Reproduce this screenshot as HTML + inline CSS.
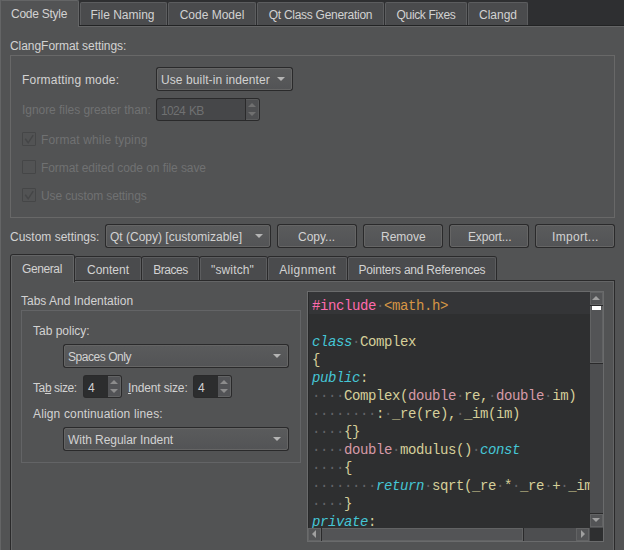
<!DOCTYPE html>
<html><head><meta charset="utf-8">
<style>
*{margin:0;padding:0;box-sizing:border-box}
html,body{width:624px;height:550px;overflow:hidden;background:#525354}
body{position:relative;font-family:"Liberation Sans",sans-serif;font-size:12px;color:#d2d2d2}
.a{position:absolute}
.t{position:absolute;white-space:pre;line-height:14px;font-size:12px;color:#d2d2d2}
.dis{color:#707172}
.u{text-decoration:underline;text-underline-offset:1px}
.mt{position:absolute;top:2px;height:23px;background:#4a4b4d;border:1px solid #5c5d5f;border-bottom:none;border-radius:2px 2px 0 0}
.st{position:absolute;background:#2a2a2b;border-radius:3px 3px 0 0}
.st>div{position:absolute;left:1px;top:1px;right:1px;bottom:0;background:#4a4b4d;border:1px solid #5c5d5f;border-bottom:none;border-radius:2px 2px 0 0}
.btn{position:absolute;background:#2a2a2b;border-radius:3px}
.btn>div{position:absolute;left:1px;top:1px;right:1px;bottom:1px;border:1px solid #656565;border-radius:2px;background:linear-gradient(#5a5b5c,#535456)}
.gb{position:absolute;border:1px solid #686868}
.cb{position:absolute;width:14px;height:14px;border:1px solid #454647;border-radius:1px}
.code{position:absolute;font-family:"Liberation Mono",monospace;font-size:14px;letter-spacing:-0.4px;line-height:18px;white-space:pre;color:#d6cf9a}
.pp{color:#ff6aad}.str{color:#d69545}.kw{color:#45c6d6;font-style:italic}.pt{color:#d69aa7}.ws{color:#636468}
</style></head><body>
<div class="a" style="left:0;top:0;width:624px;height:25px;background:#2e2f31"></div>
<div class="a" style="left:0;top:25px;width:624px;height:1px;background:#222324"></div>
<div class="a" style="left:0;top:26px;width:624px;height:1px;background:#646566"></div>
<div class="a" style="left:0;top:0;width:1px;height:550px;background:#646566"></div>
<div class="a" style="left:0;top:0;width:79px;height:27px;background:#525354;border:1px solid #646566;border-bottom:none;border-radius:2px 2px 0 0"></div>
<div class="t" style="left:11px;top:7px;letter-spacing:-0.25px">Code Style</div>
<div class="mt" style="left:80px;width:87px"></div>
<div class="t" style="left:80px;top:8px;width:87px;text-align:center;letter-spacing:0px;margin-left:-1px">File Naming</div>
<div class="mt" style="left:168px;width:88px"></div>
<div class="t" style="left:168px;top:8px;width:88px;text-align:center;letter-spacing:0px;margin-left:0px">Code Model</div>
<div class="mt" style="left:257px;width:127px"></div>
<div class="t" style="left:257px;top:8px;width:127px;text-align:center;letter-spacing:-0.28px;margin-left:0px">Qt Class Generation</div>
<div class="mt" style="left:385px;width:82px"></div>
<div class="t" style="left:385px;top:8px;width:82px;text-align:center;letter-spacing:-0.35px;margin-left:0px">Quick Fixes</div>
<div class="mt" style="left:468px;width:60px"></div>
<div class="t" style="left:468px;top:8px;width:60px;text-align:center;letter-spacing:0px;margin-left:0px">Clangd</div>
<div class="t" style="left:10px;top:39px;letter-spacing:-0.05px">ClangFormat settings:</div>
<div class="gb" style="left:10px;top:55px;width:605px;height:163px"></div>
<div class="t" style="left:22px;top:73px;letter-spacing:0.2px">Formatting mode:</div>
<div class="btn" style="left:156px;top:67px;width:137px;height:24px"><div></div></div>
<div class="t" style="left:161px;top:73px;letter-spacing:0.1px">Use built-in indenter</div>
<div class="a" style="left:277px;top:77px;width:0;height:0;border-left:4px solid transparent;border-right:4px solid transparent;border-top:4px solid #b4b4b4"></div>
<div class="t dis" style="left:22px;top:103px;letter-spacing:-0.05px">Ignore files greater than:</div>
<div class="a" style="left:156px;top:98px;width:104px;height:23px;background:#2a2a2b;border-radius:3px"></div>
<div class="a" style="left:157px;top:99px;width:88px;height:21px;background:#464749;border-radius:2px 0 0 2px"></div>
<div class="a" style="left:246px;top:99px;width:13px;height:21px;background:#4f5052;border:1px solid #5a5b5c;border-left:none;border-radius:0 2px 2px 0"></div>
<div class="t dis" style="left:161px;top:104px;letter-spacing:-0.7px;word-spacing:1.5px">1024 KB</div>
<div class="a" style="left:248px;top:103px;width:0;height:0;border-left:4px solid transparent;border-right:4px solid transparent;border-bottom:4px solid #707070"></div>
<div class="a" style="left:248px;top:112px;width:0;height:0;border-left:4px solid transparent;border-right:4px solid transparent;border-top:4px solid #707070"></div>
<div class="cb" style="left:22px;top:132px"></div>
<svg class="a" style="left:22px;top:132px" width="14" height="14"><path d="M3.2 6.8 L6.2 10.8 L11.2 3.2" stroke="#454647" stroke-width="1.5" fill="none"/></svg>
<div class="t dis" style="left:41px;top:133px;letter-spacing:0.13px">Format while typing</div>
<div class="cb" style="left:22px;top:160px"></div>
<div class="t dis" style="left:41px;top:161px;letter-spacing:-0.08px">Format edited code on file save</div>
<div class="cb" style="left:22px;top:188px"></div>
<svg class="a" style="left:22px;top:188px" width="14" height="14"><path d="M3.2 6.8 L6.2 10.8 L11.2 3.2" stroke="#454647" stroke-width="1.5" fill="none"/></svg>
<div class="t dis" style="left:41px;top:189px;letter-spacing:-0.13px">Use custom settings</div>
<div class="t" style="left:10px;top:230px">Custom settings:</div>
<div class="btn" style="left:105px;top:224px;width:166px;height:24px"><div></div></div>
<div class="t" style="left:110px;top:230px">Qt (Copy) [customizable]</div>
<div class="a" style="left:255px;top:234px;width:0;height:0;border-left:4px solid transparent;border-right:4px solid transparent;border-top:4px solid #b4b4b4"></div>
<div class="btn" style="left:277px;top:224px;width:80px;height:24px"><div></div></div>
<div class="t" style="left:298px;top:230px;letter-spacing:0px">Copy...</div>
<div class="btn" style="left:363px;top:224px;width:80px;height:24px"><div></div></div>
<div class="t" style="left:381px;top:230px;letter-spacing:0px">Remove</div>
<div class="btn" style="left:449px;top:224px;width:80px;height:24px"><div></div></div>
<div class="t" style="left:468px;top:230px;letter-spacing:-0.15px">Export...</div>
<div class="btn" style="left:535px;top:224px;width:80px;height:24px"><div></div></div>
<div class="t" style="left:552px;top:230px;letter-spacing:0.3px">Import...</div>
<div class="a" style="left:10px;top:280px;width:605px;height:300px;background:#2a2a2b"></div>
<div class="a" style="left:11px;top:281px;width:603px;height:300px;background:#525354;border:1px solid #646566;border-bottom:none"></div>
<div class="a" style="left:10px;top:254px;width:65px;height:28px;background:#2a2a2b;border-radius:3px 3px 0 0"></div>
<div class="a" style="left:11px;top:255px;width:63px;height:28px;background:#525354;border:1px solid #646566;border-bottom:none;border-radius:2px 2px 0 0"></div>
<div class="t" style="left:22px;top:262px;letter-spacing:-0.4px">General</div>
<div class="st" style="left:74px;top:256px;width:68px;height:24px"><div></div></div>
<div class="t" style="left:75px;top:263px;width:66px;text-align:center;letter-spacing:0px;margin-left:0px">Content</div>
<div class="st" style="left:141px;top:256px;width:59px;height:24px"><div></div></div>
<div class="t" style="left:142px;top:263px;width:57px;text-align:center;letter-spacing:-0.45px;margin-left:0px">Braces</div>
<div class="st" style="left:199px;top:256px;width:69px;height:24px"><div></div></div>
<div class="t" style="left:200px;top:263px;width:67px;text-align:center;letter-spacing:0.15px;margin-left:-1px">"switch"</div>
<div class="st" style="left:267px;top:256px;width:81px;height:24px"><div></div></div>
<div class="t" style="left:268px;top:263px;width:79px;text-align:center;letter-spacing:0.37px;margin-left:0px">Alignment</div>
<div class="st" style="left:347px;top:256px;width:150px;height:24px"><div></div></div>
<div class="t" style="left:348px;top:263px;width:148px;text-align:center;letter-spacing:-0.23px;margin-left:0px">Pointers and References</div>
<div class="t" style="left:21px;top:294px">Tabs And Indentation</div>
<div class="gb" style="left:21px;top:310px;width:280px;height:153px;border-color:#636466"></div>
<div class="t" style="left:33px;top:324px">Tab policy:</div>
<div class="btn" style="left:63px;top:344px;width:226px;height:24px"><div></div></div>
<div class="t" style="left:68px;top:350px;letter-spacing:-0.45px">Spaces Only</div>
<div class="a" style="left:273px;top:354px;width:0;height:0;border-left:4px solid transparent;border-right:4px solid transparent;border-top:4px solid #b4b4b4"></div>
<div class="t" style="left:33px;top:381px;letter-spacing:-0.4px">Ta<span class="u">b</span> size:</div>
<div class="t" style="left:128px;top:381px;letter-spacing:-0.15px"><span class="u">I</span>ndent size:</div>
<div class="a" style="left:83px;top:375px;width:39px;height:23px;background:#2a2a2b;border-radius:3px"></div>
<div class="a" style="left:84px;top:376px;width:24px;height:21px;background:#2c2d2e;border-radius:2px 0 0 2px"></div>
<div class="a" style="left:108px;top:376px;width:13px;height:21px;background:#525356;border:1px solid #626364;border-left:none;border-radius:0 2px 2px 0"></div>
<div class="t" style="left:88px;top:381px">4</div>
<div class="a" style="left:110px;top:380px;width:0;height:0;border-left:4px solid transparent;border-right:4px solid transparent;border-bottom:4px solid #8c8c8c"></div>
<div class="a" style="left:110px;top:389px;width:0;height:0;border-left:4px solid transparent;border-right:4px solid transparent;border-top:4px solid #8c8c8c"></div>
<div class="a" style="left:193px;top:375px;width:39px;height:23px;background:#2a2a2b;border-radius:3px"></div>
<div class="a" style="left:194px;top:376px;width:24px;height:21px;background:#2c2d2e;border-radius:2px 0 0 2px"></div>
<div class="a" style="left:218px;top:376px;width:13px;height:21px;background:#525356;border:1px solid #626364;border-left:none;border-radius:0 2px 2px 0"></div>
<div class="t" style="left:198px;top:381px">4</div>
<div class="a" style="left:220px;top:380px;width:0;height:0;border-left:4px solid transparent;border-right:4px solid transparent;border-bottom:4px solid #8c8c8c"></div>
<div class="a" style="left:220px;top:389px;width:0;height:0;border-left:4px solid transparent;border-right:4px solid transparent;border-top:4px solid #8c8c8c"></div>
<div class="t" style="left:33px;top:407px;letter-spacing:0.15px">Align continuation lines:</div>
<div class="btn" style="left:63px;top:427px;width:226px;height:24px"><div></div></div>
<div class="t" style="left:68px;top:433px;letter-spacing:-0.05px">With Regular Indent</div>
<div class="a" style="left:273px;top:437px;width:0;height:0;border-left:4px solid transparent;border-right:4px solid transparent;border-top:4px solid #b4b4b4"></div>
<div class="a" style="left:307px;top:291px;width:297px;height:251px;background:#2e2f30;border:1px solid #6a6b6c;"></div>
<div class="a" style="left:308px;top:292px;width:1px;height:236px;background:#28292a"></div>
<div class="a" style="left:309px;top:292px;width:281px;height:22px;background:#343537"></div>
<div class="a" style="left:309px;top:293px;width:281px;height:235px;overflow:hidden"><div class="code" style="left:3px;top:4px"><span class="pp">#include</span><span class="ws">·</span><span class="str">&lt;math.h&gt;</span>

<span class="kw">class</span><span class="ws">·</span>Complex
{
<span class="kw">public</span>:
<span class="ws">····</span>Complex(<span class="pt">double</span><span class="ws">·</span>re,<span class="ws">·</span><span class="pt">double</span><span class="ws">·</span>im)
<span class="ws">········</span>:<span class="ws">·</span>_re(re),<span class="ws">·</span>_im(im)
<span class="ws">····</span>{}
<span class="ws">····</span><span class="pt">double</span><span class="ws">·</span>modulus()<span class="ws">·</span><span class="kw">const</span>
<span class="ws">····</span>{
<span class="ws">········</span><span class="kw">return</span><span class="ws">·</span>sqrt(_re<span class="ws">·</span>*<span class="ws">·</span>_re<span class="ws">·</span>+<span class="ws">·</span>_im
<span class="ws">····</span>}
<span class="kw">private</span>:
</div></div>
<div class="a" style="left:590px;top:292px;width:13px;height:236px;background:#4d4e50"></div>
<div class="a" style="left:590px;top:292px;width:13px;height:13px;background:#535456;border:1px solid #626364"></div>
<div class="a" style="left:592px;top:296px;width:0;height:0;border-left:4px solid transparent;border-right:4px solid transparent;border-bottom:4px solid #a0a0a0"></div>
<div class="a" style="left:590px;top:305px;width:13px;height:1px;background:#2a2a2b"></div>
<div class="a" style="left:590px;top:306px;width:13px;height:57px;background:#535456;border:1px solid #626364;border-top:none"></div>
<div class="a" style="left:592px;top:306px;width:9px;height:4px;background:#ffffff"></div>
<div class="a" style="left:590px;top:363px;width:13px;height:1px;background:#2a2a2b"></div>
<div class="a" style="left:590px;top:513px;width:13px;height:1px;background:#2a2a2b"></div>
<div class="a" style="left:590px;top:514px;width:13px;height:13px;background:#535456;border:1px solid #626364"></div>
<div class="a" style="left:592px;top:518px;width:0;height:0;border-left:4px solid transparent;border-right:4px solid transparent;border-top:4px solid #a0a0a0"></div>
<div class="a" style="left:308px;top:528px;width:282px;height:13px;background:#4d4e50"></div>
<div class="a" style="left:308px;top:528px;width:13px;height:13px;background:#535456;border:1px solid #626364"></div>
<div class="a" style="left:321px;top:528px;width:1px;height:13px;background:#2a2a2b"></div>
<div class="a" style="left:322px;top:528px;width:201px;height:13px;background:#535456;border:1px solid #626364;border-left:none"></div>
<div class="a" style="left:523px;top:528px;width:1px;height:13px;background:#2a2a2b"></div>
<div class="a" style="left:576px;top:528px;width:13px;height:13px;background:#535456;border:1px solid #626364"></div>
<div class="a" style="left:312px;top:530px;width:0;height:0;border-top:4px solid transparent;border-bottom:4px solid transparent;border-right:4px solid #a0a0a0"></div>
<div class="a" style="left:581px;top:530px;width:0;height:0;border-top:4px solid transparent;border-bottom:4px solid transparent;border-left:4px solid #a0a0a0"></div>
<div class="a" style="left:590px;top:528px;width:13px;height:13px;background:#2e2f30"></div>
</body></html>
